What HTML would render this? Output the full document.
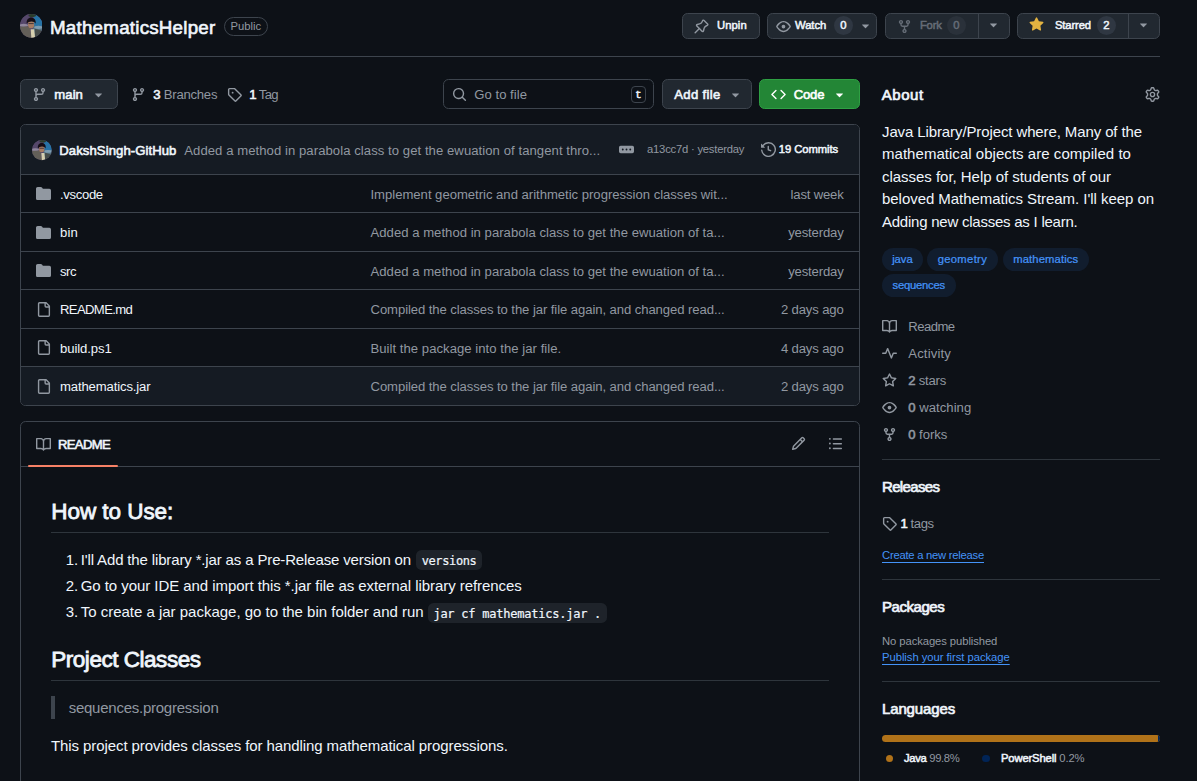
<!DOCTYPE html>
<html lang="en">
<head>
<meta charset="utf-8">
<title>MathematicsHelper</title>
<style>
*{box-sizing:border-box;margin:0;padding:0}
html,body{width:1197px;height:781px;overflow:hidden;background:#0d1117}
body{font-family:"Liberation Sans",sans-serif;font-size:13.125px;color:#f0f6fc;position:relative;line-height:1.5}
svg{display:block;fill:currentColor}
.abs{position:absolute}
.ic{width:15px;height:15px}
.muted{color:#9198a1}
b,strong{font-weight:400;-webkit-text-stroke:.045em}
a{color:inherit;text-decoration:none}

/* header */
#hline{left:20px;top:56px;width:1140px;height:1px;background:#3d444d}
#title{left:50px;top:15px;height:25px;line-height:25px;font-size:18.75px;font-weight:400;-webkit-text-stroke:.034em;white-space:nowrap}
#public{left:223.5px;top:16.5px;height:19px;line-height:17px;padding:0 6px;border:1px solid #3d444d;border-radius:20px;font-size:11.25px;color:#9198a1;font-weight:500}
.btn{position:absolute;height:26.25px;border:1px solid #3d444d;border-radius:5.6px;background:#212830;font-size:11.25px;font-weight:400;-webkit-text-stroke:.045em;color:#f0f6fc;display:flex;align-items:center;white-space:nowrap}
.btn.md{height:30px;font-size:13.125px}
.cnt{display:inline-block;min-width:18.75px;height:18.75px;line-height:18.75px;border-radius:20px;background:#2f3742;text-align:center;font-size:11.25px;font-weight:400;-webkit-text-stroke:.045em;padding:0 5px}
.tri{width:15px;height:15px;color:#9198a1}

/* toolbar */
#goto{left:443px;top:79px;width:211px;height:29.75px;border:1px solid #3d444d;border-radius:5.6px;background:#0d1117}
#kbd{left:630.75px;top:85.75px;width:15.25px;height:17.25px;font-weight:400;-webkit-text-stroke:.045em;padding-top:1px;border:1px solid #3d444d;border-radius:4px;font-family:"Liberation Mono",monospace;font-size:10.5px;line-height:14px;text-align:center;color:#f0f6fc}
.txt{position:absolute;white-space:nowrap}

/* file box */
#fbox{left:20px;top:124px;width:839.5px;height:282px;border:1px solid #3d444d;border-radius:5.6px;overflow:hidden}
#fhead{left:0;top:0;width:100%;height:50px;background:#151b23;border-bottom:1px solid #3d444d}
.rowline{position:absolute;left:21px;width:837.5px;height:1px;background:#3d444d}
.fn{position:absolute;left:60px;white-space:nowrap;color:#f0f6fc;line-height:20px}
.fm{position:absolute;left:370.5px;white-space:nowrap;color:#9198a1;line-height:20px}
.fd{position:absolute;right:353.4px;white-space:nowrap;color:#9198a1;line-height:20px;text-align:right}
.small{font-size:11.25px}
/* readme */
#rbox{left:20px;top:421.25px;width:839.5px;height:380px;border:1px solid #3d444d;border-radius:5.6px}
#rline{left:21px;top:466.25px;width:837.5px;height:1px;background:#3d444d}
#rtab{left:27.5px;top:464.5px;width:90px;height:2.25px;background:#f78166;border-radius:2px}
.md{position:absolute;white-space:nowrap;font-size:15px;line-height:22.5px;color:#f0f6fc}
.mh{position:absolute;white-space:nowrap;font-size:22.5px;line-height:28px;font-weight:400;-webkit-text-stroke:.036em;color:#f0f6fc}
.mhl{position:absolute;left:51px;width:778px;height:1px;background:#3d444db3}
.cd{font-family:"DejaVu Sans Mono","Liberation Mono",monospace;font-size:12px;-webkit-text-stroke:.2px;background:rgba(101,108,118,.2);border-radius:5.6px;padding:4.2px 5.5px 0;position:absolute;white-space:nowrap;line-height:15px;height:19.75px;color:#f0f6fc}
/* sidebar */
.sb{position:absolute;white-space:nowrap;font-size:15px;line-height:22.5px;color:#f0f6fc}
.topic{position:absolute;height:22.5px;line-height:22.5px;border-radius:20px;background:rgba(56,139,253,.1);color:#4493f8;font-size:11.25px;font-weight:400;-webkit-text-stroke:.022em;text-align:center;white-space:nowrap}
.sl{position:absolute;left:908.25px;white-space:nowrap;color:#9198a1;line-height:20px}
.sline{position:absolute;left:882px;width:278px;height:1px;background:#3d444db3}
.lnk{position:absolute;white-space:nowrap;color:#4493f8;font-size:11.25px;line-height:16px;text-decoration:underline;text-underline-offset:2.5px}
/*FIT*/
#title{letter-spacing:0.233px}
#t_unpin{letter-spacing:0.069px}
#t_watch{letter-spacing:-0.044px}
#t_fork{letter-spacing:-0.250px}
#t_starred{letter-spacing:-0.129px}
#t_main{letter-spacing:0.082px}
#t_branches{letter-spacing:-0.234px}
#t_tag{letter-spacing:-0.619px}
#t_goto{letter-spacing:0.028px}
#t_addfile{letter-spacing:0.346px}
#t_code{letter-spacing:-0.211px}
#t_about{letter-spacing:0.559px}
#t_author{letter-spacing:0.082px}
#t_cmsg{letter-spacing:0.059px}
#t_sha{letter-spacing:-0.214px}
#t_commits{letter-spacing:-0.077px}
#fn0{letter-spacing:-0.341px}
#fn1{letter-spacing:0.167px}
#fn2{letter-spacing:-0.495px}
#fn3{letter-spacing:-0.639px}
#fn4{letter-spacing:-0.098px}
#fn5{letter-spacing:-0.135px}
#fm0{letter-spacing:-0.022px}
#fm1{letter-spacing:0.022px}
#fm2{letter-spacing:0.022px}
#fm3{letter-spacing:-0.082px}
#fm4{letter-spacing:0.034px}
#fm5{letter-spacing:-0.082px}
#fd0{letter-spacing:-0.184px}
#fd1{letter-spacing:-0.160px}
#fd2{letter-spacing:-0.160px}
#fd3{letter-spacing:-0.144px}
#fd4{letter-spacing:-0.144px}
#fd5{letter-spacing:-0.144px}
#t_readme{letter-spacing:-0.682px}
#h_how{letter-spacing:-0.050px}
#li1{letter-spacing:-0.144px}
#li2{letter-spacing:-0.059px}
#li3{letter-spacing:-0.013px}
#h_proj{letter-spacing:-0.471px}
#bq{letter-spacing:-0.253px}
#p1{letter-spacing:-0.086px}
#d0{letter-spacing:-0.110px}
#d1{letter-spacing:0.038px}
#d2{letter-spacing:-0.031px}
#d3{letter-spacing:-0.046px}
#d4{letter-spacing:-0.237px}
#tp0{letter-spacing:-0.035px}
#tp1{letter-spacing:0.324px}
#tp2{letter-spacing:0.134px}
#tp3{letter-spacing:-0.214px}
#sl0{letter-spacing:-0.527px}
#sl1{letter-spacing:0.146px}
#sl2{letter-spacing:-0.223px}
#sl3{letter-spacing:0.031px}
#sl4{letter-spacing:-0.051px}
#t_rel{letter-spacing:-0.656px}
#t_tags{letter-spacing:-0.422px}
#l_rel{letter-spacing:-0.247px}
#t_pkg{letter-spacing:-0.447px}
#t_nopkg{letter-spacing:-0.079px}
#l_pkg{letter-spacing:-0.043px}
#t_lang{letter-spacing:-0.139px}
#t_java{letter-spacing:-0.351px}
#t_ps{letter-spacing:-0.154px}
#cdt1{letter-spacing:-0.387px}
#cdt2{letter-spacing:-0.237px}
/*ENDFIT*/
</style>
</head>
<body>

<!-- ===== header ===== -->
<div class="abs" id="avatar1" style="left:19.75px;top:14.4px;width:22.6px;height:23.7px"><svg viewBox="0 0 24 24" width="22.6" height="23.7" preserveAspectRatio="none"><defs><clipPath id="c1"><circle cx="12" cy="12" r="12"/></clipPath><filter id="b1" x="-20%" y="-20%" width="140%" height="140%"><feGaussianBlur stdDeviation="0.7"/></filter></defs><g clip-path="url(#c1)"><rect width="24" height="24" fill="#55466a"/><g filter="url(#b1)"><rect x="-2" y="-2" width="28" height="28" fill="#55466a"/><path d="M14 -2 L26 -2 L26 14 L15 13Z" fill="#2873a6"/><path d="M14 12 L26 12 L26 26 L14 26Z" fill="#56707f"/><ellipse cx="19.500" cy="13.500" rx="4.500" ry="1.600" fill="#7d9db3"/><ellipse cx="4" cy="11.500" rx="4.500" ry="1.600" fill="#8f869d"/><path d="M-2 13 L10 12.500 L13 26 L-2 26Z" fill="#645e58"/><path d="M16 15 L26 18 L26 26 L15 26Z" fill="#444b48"/><path d="M11.300 15.500 L15 15.500 L16.300 26 L12.200 26Z" fill="#d6cfae"/><ellipse cx="11.800" cy="10.300" rx="3.300" ry="4.200" fill="#a67b62"/><path d="M7.200 10 C5.800 1.500 18 1.500 16.600 10 C15.500 6.800 9 6.800 7.200 10Z" fill="#121117"/><rect x="9" y="9.300" width="5.500" height="0.900" fill="#3a2c30"/><ellipse cx="13" cy="1.500" rx="4" ry="1.500" fill="#2c3d2c"/></g></g></svg></div>
<div class="abs" id="title">MathematicsHelper</div>
<div class="abs" id="public">Public</div>
<div class="abs" id="hline"></div>

<!-- ===== header buttons ===== -->
<div class="btn" style="left:682px;top:13px;width:77.5px"></div>
<svg class="abs" style="left:694px;top:18.5px;width:15px;height:15px;color:#9198a1" viewBox="0 0 16 16"><path d="m11.294.984 3.722 3.722a1.75 1.75 0 0 1-.504 2.826l-1.327.613a3.089 3.089 0 0 0-1.707 2.084l-.584 2.454c-.317 1.332-1.972 1.8-2.94.832L5.75 11.311 1.78 15.28a.749.749 0 1 1-1.06-1.06l3.969-3.97-2.204-2.204c-.968-.968-.5-2.623.832-2.94l2.454-.584a3.08 3.08 0 0 0 2.084-1.707l.613-1.327a1.75 1.75 0 0 1 2.826-.504ZM6.283 9.723l2.732 2.731a.25.25 0 0 0 .42-.119l.584-2.454a4.586 4.586 0 0 1 2.537-3.098l1.328-.613a.25.25 0 0 0 .072-.404l-3.722-3.722a.25.25 0 0 0-.404.072l-.613 1.328a4.584 4.584 0 0 1-3.098 2.537l-2.454.584a.25.25 0 0 0-.119.42l2.731 2.732Z"/></svg>
<div class="txt" id="t_unpin" style="left:717px;top:13.4px;line-height:25.75px;font-size:11.25px;font-weight:400;-webkit-text-stroke:.045em">Unpin</div>
<div class="btn" style="left:767px;top:13px;width:109.5px"></div>
<svg class="abs" style="left:776px;top:18.5px;width:15px;height:15px;color:#9198a1" viewBox="0 0 16 16"><path d="M8 2c1.981 0 3.671.992 4.933 2.078 1.27 1.091 2.187 2.345 2.637 3.023a1.62 1.62 0 0 1 0 1.798c-.45.678-1.367 1.932-2.637 3.023C11.67 13.008 9.981 14 8 14c-1.981 0-3.671-.992-4.933-2.078C1.797 10.83.88 9.576.43 8.898a1.62 1.62 0 0 1 0-1.798c.45-.677 1.367-1.931 2.637-3.022C4.33 2.992 6.019 2 8 2ZM1.679 7.932a.12.12 0 0 0 0 .136c.411.622 1.241 1.75 2.366 2.717C5.176 11.758 6.527 12.5 8 12.5c1.473 0 2.825-.742 3.955-1.715 1.124-.967 1.954-2.096 2.366-2.717a.12.12 0 0 0 0-.136c-.412-.621-1.242-1.75-2.366-2.717C10.824 4.242 9.473 3.5 8 3.500c-1.473 0-2.825.742-3.955 1.715-1.124.967-1.954 2.096-2.366 2.717ZM8 10a2 2 0 1 1-.001-3.999A2 2 0 0 1 8 10Z"/></svg>
<div class="txt" id="t_watch" style="left:795px;top:13.4px;line-height:25.75px;font-size:11.25px;font-weight:400;-webkit-text-stroke:.045em">Watch</div>
<div class="abs cnt" style="left:834px;top:16px">0</div>
<svg class="abs tri" style="left:857.5px;top:18px" viewBox="0 0 16 16"><path d="m4.427 7.427 3.396 3.396a.25.25 0 0 0 .354 0l3.396-3.396A.25.25 0 0 0 11.396 7H4.604a.25.25 0 0 0-.177.427Z"/></svg>
<div class="btn" style="left:884.5px;top:13px;width:125px;background:#212830"></div>
<div class="abs" style="left:978px;top:14px;width:1px;height:24px;background:#3d444d"></div>
<svg class="abs" style="left:896.5px;top:18.5px;width:15px;height:15px;color:#656c76" viewBox="0 0 16 16"><path d="M5 5.372v.878c0 .414.336.75.75.75h4.5a.75.75 0 0 0 .75-.75v-.878a2.25 2.25 0 1 1 1.5 0v.878a2.25 2.25 0 0 1-2.25 2.25h-1.500v2.128a2.251 2.251 0 1 1-1.500 0V8.500h-1.500A2.250 2.250 0 0 1 3.500 6.250v-.878a2.250 2.250 0 1 1 1.500 0ZM5 3.250a.750.750 0 1 0-1.500 0 .750.750 0 0 0 1.500 0Zm6.750.750a.750.750 0 1 0 0-1.500.750.750 0 0 0 0 1.500Zm-3 8.750a.750.750 0 1 0-1.500 0 .750.750 0 0 0 1.500 0Z"/></svg>
<div class="txt" id="t_fork" style="left:920px;top:13.4px;line-height:25.75px;font-size:11.25px;font-weight:400;-webkit-text-stroke:.045em;color:#656c76">Fork</div>
<div class="abs cnt" style="left:947px;top:15.75px;color:#656c76;background:#2a313a">0</div>
<svg class="abs tri" style="left:986px;top:17.25px" viewBox="0 0 16 16"><path d="m4.427 7.427 3.396 3.396a.25.25 0 0 0 .354 0l3.396-3.396A.25.25 0 0 0 11.396 7H4.604a.25.25 0 0 0-.177.427Z"/></svg>
<div class="btn" style="left:1017px;top:13px;width:142.75px"></div>
<div class="abs" style="left:1128px;top:14px;width:1px;height:24px;background:#3d444d"></div>
<svg class="abs" style="left:1028.75px;top:17px;width:15px;height:15px;color:#e3b341" viewBox="0 0 16 16"><path d="M8 .25a.75.75 0 0 1 .673.418l1.882 3.815 4.21.612a.75.75 0 0 1 .416 1.279l-3.046 2.97.719 4.192a.751.751 0 0 1-1.088.791L8 12.347l-3.766 1.98a.75.75 0 0 1-1.088-.79l.72-4.194L.818 6.374a.75.75 0 0 1 .416-1.28l4.21-.611L7.327.668A.75.75 0 0 1 8 .25Z"/></svg>
<div class="txt" id="t_starred" style="left:1055px;top:13.4px;line-height:25.75px;font-size:11.25px;font-weight:400;-webkit-text-stroke:.045em">Starred</div>
<div class="abs cnt" style="left:1097px;top:15.75px">2</div>
<svg class="abs tri" style="left:1136px;top:17.25px" viewBox="0 0 16 16"><path d="m4.427 7.427 3.396 3.396a.25.25 0 0 0 .354 0l3.396-3.396A.25.25 0 0 0 11.396 7H4.604a.25.25 0 0 0-.177.427Z"/></svg>
<!-- ===== toolbar ===== -->
<div class="btn md" style="left:20px;top:79px;width:97.5px;height:29.75px"></div>
<svg class="abs" style="left:31.5px;top:86.5px;width:15px;height:15px;color:#9198a1" viewBox="0 0 16 16"><path d="M9.5 3.25a2.25 2.25 0 1 1 3 2.122V6A2.5 2.5 0 0 1 10 8.5H6a1 1 0 0 0-1 1v1.128a2.251 2.251 0 1 1-1.5 0V5.372a2.25 2.25 0 1 1 1.5 0v1.836A2.493 2.493 0 0 1 6 7h4a1 1 0 0 0 1-1v-.628A2.25 2.25 0 0 1 9.5 3.25Zm-6 0a.75.75 0 1 0 1.5 0 .75.75 0 0 0-1.5 0Zm8.25-.75a.75.75 0 1 0 0 1.5.75.75 0 0 0 0-1.5ZM4.25 12a.75.75 0 1 0 0 1.5.75.75 0 0 0 0-1.5Z"/></svg>
<div class="txt" id="t_main" style="left:54.25px;top:79.9px;line-height:29.75px;font-weight:400;-webkit-text-stroke:.045em">main</div>
<svg class="abs tri" style="left:90.5px;top:86.5px" viewBox="0 0 16 16"><path d="m4.427 7.427 3.396 3.396a.25.25 0 0 0 .354 0l3.396-3.396A.25.25 0 0 0 11.396 7H4.604a.25.25 0 0 0-.177.427Z"/></svg>
<svg class="abs" style="left:130.5px;top:86.5px;width:15px;height:15px;color:#9198a1" viewBox="0 0 16 16"><path d="M9.5 3.25a2.25 2.25 0 1 1 3 2.122V6A2.5 2.5 0 0 1 10 8.5H6a1 1 0 0 0-1 1v1.128a2.251 2.251 0 1 1-1.5 0V5.372a2.25 2.25 0 1 1 1.5 0v1.836A2.493 2.493 0 0 1 6 7h4a1 1 0 0 0 1-1v-.628A2.25 2.25 0 0 1 9.5 3.25Zm-6 0a.75.75 0 1 0 1.5 0 .75.75 0 0 0-1.5 0Zm8.25-.75a.75.75 0 1 0 0 1.5.75.75 0 0 0 0-1.5ZM4.25 12a.75.75 0 1 0 0 1.5.75.75 0 0 0 0-1.5Z"/></svg>
<div class="txt" id="t_branches" style="left:153.25px;top:79.9px;line-height:29.75px"><b>3</b> <span class="muted">Branches</span></div>
<svg class="abs" style="left:226.5px;top:86.5px;width:15px;height:15px;color:#9198a1" viewBox="0 0 16 16"><path d="M1 7.775V2.75C1 1.784 1.784 1 2.75 1h5.025c.464 0 .91.184 1.238.513l6.25 6.25a1.75 1.75 0 0 1 0 2.474l-5.026 5.026a1.75 1.75 0 0 1-2.474 0l-6.25-6.25A1.752 1.752 0 0 1 1 7.775Zm1.5 0c0 .066.026.13.073.177l6.25 6.25a.25.25 0 0 0 .354 0l5.025-5.025a.25.25 0 0 0 0-.354l-6.25-6.25a.25.25 0 0 0-.177-.073H2.75a.25.25 0 0 0-.25.25ZM6 5a1 1 0 1 1 0 2 1 1 0 0 1 0-2Z"/></svg>
<div class="txt" id="t_tag" style="left:249.25px;top:79.9px;line-height:29.75px"><b>1</b> <span class="muted">Tag</span></div>
<div class="abs" id="goto"></div>
<svg class="abs" style="left:451.75px;top:86.5px;width:15px;height:15px;color:#9198a1" viewBox="0 0 16 16"><path d="M10.68 11.74a6 6 0 0 1-7.922-8.982 6 6 0 0 1 8.982 7.922l3.04 3.04a.749.749 0 0 1-.326 1.275.749.749 0 0 1-.734-.215ZM11.5 7a4.499 4.499 0 1 0-8.997 0A4.499 4.499 0 0 0 11.5 7Z"/></svg>
<div class="txt muted" id="t_goto" style="left:474.25px;top:79.9px;line-height:29.75px">Go to file</div>
<div class="abs" id="kbd">t</div>
<div class="btn md" style="left:661.5px;top:79px;width:90px;height:29.75px"></div>
<div class="txt" id="t_addfile" style="left:674.25px;top:79.9px;line-height:29.75px;font-weight:400;-webkit-text-stroke:.045em">Add file</div>
<svg class="abs tri" style="left:727.75px;top:86.5px" viewBox="0 0 16 16"><path d="m4.427 7.427 3.396 3.396a.25.25 0 0 0 .354 0l3.396-3.396A.25.25 0 0 0 11.396 7H4.604a.25.25 0 0 0-.177.427Z"/></svg>
<div class="btn md" style="left:759px;top:79px;width:100.5px;height:29.75px;background:#238636;border-color:#2ea043"></div>
<svg class="abs" style="left:770.5px;top:86.5px;width:15px;height:15px;color:#ffffff" viewBox="0 0 16 16"><path d="m11.28 3.22 4.25 4.25a.75.75 0 0 1 0 1.06l-4.25 4.25a.749.749 0 0 1-1.275-.326.749.749 0 0 1 .215-.734L13.94 8l-3.72-3.72a.749.749 0 0 1 .326-1.275.749.749 0 0 1 .734.215Zm-6.56 0a.751.751 0 0 1 1.042.018.751.751 0 0 1 .018 1.042L2.06 8l3.72 3.72a.749.749 0 0 1-.326 1.275.749.749 0 0 1-.734-.215L.47 8.53a.75.75 0 0 1 0-1.06Z"/></svg>
<div class="txt" id="t_code" style="left:793.75px;top:79.9px;line-height:29.75px;font-weight:400;-webkit-text-stroke:.045em;color:#fff">Code</div>
<svg class="abs tri"  style="color:#fff;left:831.5px;top:86.5px" viewBox="0 0 16 16"><path d="m4.427 7.427 3.396 3.396a.25.25 0 0 0 .354 0l3.396-3.396A.25.25 0 0 0 11.396 7H4.604a.25.25 0 0 0-.177.427Z"/></svg>
<!-- ===== sidebar about ===== -->
<div class="txt" id="t_about" style="left:881.75px;top:84.25px;line-height:22.5px;font-size:15px;font-weight:400;-webkit-text-stroke:.045em">About</div>
<svg class="abs" style="left:1145.25px;top:87px;width:15px;height:15px;color:#9198a1" viewBox="0 0 16 16"><path d="M8 0a8.2 8.2 0 0 1 .701.031C9.444.095 9.99.645 10.16 1.29l.288 1.107c.018.066.079.158.212.224.231.114.454.243.668.386.123.082.233.09.299.071l1.103-.303c.644-.176 1.392.021 1.82.63.27.385.506.792.704 1.218.315.675.111 1.422-.364 1.891l-.814.806c-.049.048-.098.147-.088.294.016.257.016.515 0 .772-.01.147.038.246.088.294l.814.806c.475.469.679 1.216.364 1.891a7.977 7.977 0 0 1-.704 1.217c-.428.61-1.176.807-1.82.63l-1.102-.302c-.067-.019-.177-.011-.3.071a5.909 5.909 0 0 1-.668.386c-.133.066-.194.158-.211.224l-.29 1.106c-.168.646-.715 1.196-1.458 1.26a8.006 8.006 0 0 1-1.402 0c-.743-.064-1.289-.614-1.458-1.26l-.289-1.106c-.018-.066-.079-.158-.212-.224a5.738 5.738 0 0 1-.668-.386c-.123-.082-.233-.09-.299-.071l-1.103.303c-.644.176-1.392-.021-1.82-.63a8.12 8.12 0 0 1-.704-1.218c-.315-.675-.111-1.422.363-1.891l.815-.806c.05-.048.098-.147.088-.294a6.214 6.214 0 0 1 0-.772c.01-.147-.038-.246-.088-.294l-.815-.806C.635 6.045.431 5.298.746 4.623a7.92 7.920 0 0 1 .704-1.217c.428-.61 1.176-.807 1.82-.63l1.102.302c.067.019.177.011.3-.071.214-.143.437-.272.668-.386.133-.066.194-.158.211-.224l.29-1.106C6.009.645 6.556.095 7.299.03 7.530.01 7.764 0 8 0Zm-.571 1.525c-.036.003-.108.036-.137.146l-.289 1.105c-.147.561-.549.967-.998 1.189-.173.086-.34.183-.5.29-.417.278-.97.423-1.529.27l-1.103-.303c-.109-.03-.175.016-.195.045-.22.312-.412.644-.573.99-.014.031-.021.11.059.19l.815.806c.411.406.562.957.53 1.456a4.709 4.709 0 0 0 0 .582c.032.499-.119 1.05-.53 1.456l-.815.806c-.081.08-.073.159-.059.19.162.346.353.677.573.989.02.03.085.076.195.046l1.102-.303c.56-.153 1.113-.008 1.53.27.161.107.328.204.501.29.447.222.85.629.997 1.189l.289 1.105c.029.109.101.143.137.146a6.6 6.6 0 0 0 1.142 0c.036-.003.108-.036.137-.146l.289-1.105c.147-.561.549-.967.998-1.189.173-.086.34-.183.5-.29.417-.278.97-.423 1.529-.27l1.103.303c.109.029.175-.016.195-.045.22-.313.411-.644.573-.99.014-.031.021-.11-.059-.19l-.815-.806c-.411-.406-.562-.957-.53-1.456a4.709 4.709 0 0 0 0-.582c-.032-.499.119-1.05.53-1.456l.815-.806c.081-.08.073-.159.059-.19a6.464 6.464 0 0 0-.573-.989c-.02-.03-.085-.076-.195-.046l-1.102.303c-.56.153-1.113.008-1.53-.27a4.44 4.44 0 0 0-.501-.29c-.447-.222-.85-.629-.997-1.189l-.289-1.105c-.029-.11-.101-.143-.137-.146a6.6 6.6 0 0 0-1.142 0ZM11 8a3 3 0 1 1-6 0 3 3 0 0 1 6 0ZM9.5 8a1.5 1.5 0 1 0-3.001.001A1.5 1.5 0 0 0 9.5 8Z"/></svg>

<!-- ===== file box ===== -->
<div class="abs" id="fbox"><div class="abs" id="fhead"></div><div class="abs" style="left:0;top:242px;width:100%;height:39px;background:#151b23"></div></div>
<div class="abs" id="avatar2" style="left:32px;top:140.25px;width:19.75px;height:20.25px"><svg viewBox="0 0 24 24" width="19.75" height="20.25" preserveAspectRatio="none"><defs><clipPath id="c2"><circle cx="12" cy="12" r="12"/></clipPath><filter id="b2" x="-20%" y="-20%" width="140%" height="140%"><feGaussianBlur stdDeviation="0.7"/></filter></defs><g clip-path="url(#c2)"><rect width="24" height="24" fill="#55466a"/><g filter="url(#b2)"><rect x="-2" y="-2" width="28" height="28" fill="#55466a"/><path d="M14 -2 L26 -2 L26 14 L15 13Z" fill="#2873a6"/><path d="M14 12 L26 12 L26 26 L14 26Z" fill="#56707f"/><ellipse cx="19.500" cy="13.500" rx="4.500" ry="1.600" fill="#7d9db3"/><ellipse cx="4" cy="11.500" rx="4.500" ry="1.600" fill="#8f869d"/><path d="M-2 13 L10 12.500 L13 26 L-2 26Z" fill="#645e58"/><path d="M16 15 L26 18 L26 26 L15 26Z" fill="#444b48"/><path d="M11.300 15.500 L15 15.500 L16.300 26 L12.200 26Z" fill="#d6cfae"/><ellipse cx="11.800" cy="10.300" rx="3.300" ry="4.200" fill="#a67b62"/><path d="M7.200 10 C5.800 1.500 18 1.500 16.600 10 C15.500 6.800 9 6.800 7.200 10Z" fill="#121117"/><rect x="9" y="9.300" width="5.500" height="0.900" fill="#3a2c30"/><ellipse cx="13" cy="1.500" rx="4" ry="1.500" fill="#2c3d2c"/></g></g></svg></div>
<div class="txt" id="t_author" style="left:59.25px;top:140.9px;line-height:20px;font-weight:400;-webkit-text-stroke:.045em">DakshSingh-GitHub</div>
<div class="txt muted" id="t_cmsg" style="left:184.25px;top:140.9px;line-height:20px">Added a method in parabola class to get the ewuation of tangent thro...</div>
<svg class="abs" style="left:618.75px;top:142.25px;width:15px;height:15px;color:#9198a1" viewBox="0 0 16 16"><path d="M0 5.75C0 4.784.784 4 1.75 4h12.5c.966 0 1.75.784 1.75 1.75v4.5A1.75 1.75 0 0 1 14.25 12H1.75A1.75 1.75 0 0 1 0 10.25ZM12 7a1 1 0 1 0 0 2 1 1 0 0 0 0-2ZM7 8a1 1 0 1 0 2 0 1 1 0 0 0-2 0ZM4 7a1 1 0 1 0 0 2 1 1 0 0 0 0-2Z"/></svg>
<div class="txt muted small" id="t_sha" style="left:647px;top:138.6px;line-height:20px">a13cc7d · yesterday</div>
<svg class="abs" style="left:760.5px;top:141.5px;width:15px;height:15px;color:#9198a1" viewBox="0 0 16 16"><path d="m.427 1.927 1.215 1.215a8.002 8.002 0 1 1-1.6 5.685.75.75 0 1 1 1.493-.154 6.5 6.5 0 1 0 1.18-4.458l1.358 1.358A.25.25 0 0 1 3.896 6H.25A.25.25 0 0 1 0 5.75V2.104a.25.25 0 0 1 .427-.177ZM7.75 4a.75.75 0 0 1 .75.75v2.992l2.028.812a.75.75 0 0 1-.557 1.392l-2.5-1A.751.751 0 0 1 7 8.25v-3.5A.75.75 0 0 1 7.75 4Z"/></svg>
<div class="txt small" id="t_commits" style="left:778.75px;top:138.5px;line-height:20px;font-weight:400;-webkit-text-stroke:.045em">19 Commits</div>
<svg class="abs" style="left:35.75px;top:186.47px;width:15px;height:15px;color:#9198a1" viewBox="0 0 16 16"><path d="M1.75 1A1.75 1.75 0 0 0 0 2.75v10.5C0 14.216.784 15 1.75 15h12.5A1.75 1.75 0 0 0 16 13.25v-8.5A1.75 1.75 0 0 0 14.25 3H7.5a.25.25 0 0 1-.2-.1l-.9-1.2C6.07 1.26 5.55 1 5 1H1.75Z"/></svg>
<div class="fn" id="fn0" style="top:184.77px">.vscode</div>
<div class="fm" id="fm0" style="top:184.77px">Implement geometric and arithmetic progression classes wit...</div>
<div class="fd" id="fd0" style="top:184.77px">last week</div>
<svg class="abs" style="left:35.75px;top:224.91px;width:15px;height:15px;color:#9198a1" viewBox="0 0 16 16"><path d="M1.75 1A1.75 1.75 0 0 0 0 2.75v10.5C0 14.216.784 15 1.75 15h12.5A1.75 1.75 0 0 0 16 13.25v-8.5A1.75 1.75 0 0 0 14.25 3H7.5a.25.25 0 0 1-.2-.1l-.9-1.2C6.07 1.26 5.55 1 5 1H1.75Z"/></svg>
<div class="fn" id="fn1" style="top:223.21px">bin</div>
<div class="fm" id="fm1" style="top:223.21px">Added a method in parabola class to get the ewuation of ta...</div>
<div class="fd" id="fd1" style="top:223.21px">yesterday</div>
<svg class="abs" style="left:35.75px;top:263.35px;width:15px;height:15px;color:#9198a1" viewBox="0 0 16 16"><path d="M1.75 1A1.75 1.75 0 0 0 0 2.75v10.5C0 14.216.784 15 1.75 15h12.5A1.75 1.75 0 0 0 16 13.25v-8.5A1.75 1.75 0 0 0 14.25 3H7.5a.25.25 0 0 1-.2-.1l-.9-1.2C6.07 1.26 5.55 1 5 1H1.75Z"/></svg>
<div class="fn" id="fn2" style="top:261.65px">src</div>
<div class="fm" id="fm2" style="top:261.65px">Added a method in parabola class to get the ewuation of ta...</div>
<div class="fd" id="fd2" style="top:261.65px">yesterday</div>
<svg class="abs" style="left:35.75px;top:301.79px;width:15px;height:15px;color:#9198a1" viewBox="0 0 16 16"><path d="M2 1.75C2 .784 2.784 0 3.75 0h6.586c.464 0 .909.184 1.237.513l2.914 2.914c.329.328.513.773.513 1.237v9.586A1.75 1.75 0 0 1 13.25 16h-9.5A1.75 1.75 0 0 1 2 14.25Zm1.75-.25a.25.25 0 0 0-.25.25v12.5c0 .138.112.25.25.25h9.5a.25.25 0 0 0 .25-.25V6h-2.75A1.75 1.75 0 0 1 9 4.25V1.5Zm6.75.062V4.25c0 .138.112.25.25.25h2.688l-.011-.013-2.914-2.914-.013-.011Z"/></svg>
<div class="fn" id="fn3" style="top:300.09px">README.md</div>
<div class="fm" id="fm3" style="top:300.09px">Compiled the classes to the jar file again, and changed read...</div>
<div class="fd" id="fd3" style="top:300.09px">2 days ago</div>
<svg class="abs" style="left:35.75px;top:340.23px;width:15px;height:15px;color:#9198a1" viewBox="0 0 16 16"><path d="M2 1.75C2 .784 2.784 0 3.75 0h6.586c.464 0 .909.184 1.237.513l2.914 2.914c.329.328.513.773.513 1.237v9.586A1.75 1.75 0 0 1 13.25 16h-9.5A1.75 1.75 0 0 1 2 14.25Zm1.75-.25a.25.25 0 0 0-.25.25v12.5c0 .138.112.25.25.25h9.5a.25.25 0 0 0 .25-.25V6h-2.75A1.75 1.75 0 0 1 9 4.25V1.5Zm6.75.062V4.25c0 .138.112.25.25.25h2.688l-.011-.013-2.914-2.914-.013-.011Z"/></svg>
<div class="fn" id="fn4" style="top:338.53px">build.ps1</div>
<div class="fm" id="fm4" style="top:338.53px">Built the package into the jar file.</div>
<div class="fd" id="fd4" style="top:338.53px">4 days ago</div>
<svg class="abs" style="left:35.75px;top:378.67px;width:15px;height:15px;color:#9198a1" viewBox="0 0 16 16"><path d="M2 1.75C2 .784 2.784 0 3.75 0h6.586c.464 0 .909.184 1.237.513l2.914 2.914c.329.328.513.773.513 1.237v9.586A1.75 1.75 0 0 1 13.25 16h-9.5A1.75 1.75 0 0 1 2 14.25Zm1.75-.25a.25.25 0 0 0-.25.25v12.5c0 .138.112.25.25.25h9.5a.25.25 0 0 0 .25-.25V6h-2.75A1.75 1.75 0 0 1 9 4.25V1.5Zm6.75.062V4.25c0 .138.112.25.25.25h2.688l-.011-.013-2.914-2.914-.013-.011Z"/></svg>
<div class="fn" id="fn5" style="top:376.97px">mathematics.jar</div>
<div class="fm" id="fm5" style="top:376.97px">Compiled the classes to the jar file again, and changed read...</div>
<div class="fd" id="fd5" style="top:376.97px">2 days ago</div>
<div class="rowline" style="top:212px"></div>
<div class="rowline" style="top:251px"></div>
<div class="rowline" style="top:289px"></div>
<div class="rowline" style="top:328px"></div>
<div class="rowline" style="top:366px"></div>
<!-- ===== readme ===== -->
<div class="abs" id="rbox"></div><div class="abs" id="rline"></div><div class="abs" id="rtab"></div>
<svg class="abs" style="left:35.75px;top:436.5px;width:15px;height:15px;color:#9198a1" viewBox="0 0 16 16"><path d="M0 1.75A.75.75 0 0 1 .75 1h4.253c1.227 0 2.317.59 3 1.501A3.743 3.743 0 0 1 11.006 1h4.245a.75.75 0 0 1 .75.75v10.5a.75.75 0 0 1-.75.75h-4.507a2.25 2.25 0 0 0-1.591.659l-.622.621a.75.75 0 0 1-1.06 0l-.622-.621A2.25 2.25 0 0 0 5.258 13H.75a.75.75 0 0 1-.75-.75Zm7.251 10.324.004-5.073-.002-2.253A2.25 2.25 0 0 0 5.003 2.5H1.5v9h3.757a3.75 3.75 0 0 1 1.994.574ZM8.755 4.75l-.004 7.322a3.752 3.752 0 0 1 1.992-.572H14.5v-9h-3.495a2.25 2.25 0 0 0-2.25 2.25Z"/></svg>
<div class="txt" id="t_readme" style="left:58px;top:435px;line-height:20px;font-weight:400;-webkit-text-stroke:.045em">README</div>
<svg class="abs" style="left:790.5px;top:436px;width:15px;height:15px;color:#9198a1" viewBox="0 0 16 16"><path d="M11.013 1.427a1.75 1.75 0 0 1 2.474 0l1.086 1.086a1.75 1.75 0 0 1 0 2.474l-8.61 8.61c-.21.21-.47.364-.756.445l-3.251.93a.75.75 0 0 1-.927-.928l.929-3.25c.081-.286.235-.547.445-.758l8.61-8.61Zm.176 4.823L9.75 4.81l-6.286 6.287a.253.253 0 0 0-.064.108l-.558 1.953 1.953-.558a.253.253 0 0 0 .108-.064Zm1.238-3.763a.25.25 0 0 0-.354 0L10.811 3.75l1.439 1.44 1.263-1.263a.25.25 0 0 0 0-.354Z"/></svg>
<svg class="abs" style="left:828px;top:436px;width:15px;height:15px;color:#9198a1" viewBox="0 0 16 16"><path d="M5.75 2.5h8.5a.75.75 0 0 1 0 1.5h-8.5a.75.75 0 0 1 0-1.5Zm0 5h8.5a.75.75 0 0 1 0 1.5h-8.5a.75.75 0 0 1 0-1.5Zm0 5h8.5a.75.75 0 0 1 0 1.5h-8.5a.75.75 0 0 1 0-1.5ZM2 14a1 1 0 1 1 0-2 1 1 0 0 1 0 2Zm1-6a1 1 0 1 1-2 0 1 1 0 0 1 2 0ZM2 4a1 1 0 1 1 0-2 1 1 0 0 1 0 2Z"/></svg>
<div class="mh" id="h_how" style="left:51.25px;top:497.5px">How to Use:</div>
<div class="mhl" style="top:532.25px"></div>
<div class="md" style="left:65.75px;top:548.5px">1.</div><div class="md" id="li1" style="left:80.75px;top:548.5px">I'll Add the library *.jar as a Pre-Release version on</div>
<div class="cd" id="cd1" style="left:416.2px;top:550px;width:65.6px"><span id="cdt1">versions</span></div>
<div class="md" style="left:65.75px;top:574.5px">2.</div><div class="md" id="li2" style="left:80.75px;top:574.5px">Go to your IDE and import this *.jar file as external library refrences</div>
<div class="md" style="left:65.75px;top:600.75px">3.</div><div class="md" id="li3" style="left:80.75px;top:600.75px">To create a jar package, go to the bin folder and run</div>
<div class="cd" id="cd2" style="left:427.9px;top:603px;width:179.3px"><span id="cdt2">jar cf mathematics.jar .</span></div>
<div class="mh" id="h_proj" style="left:51.25px;top:646px">Project Classes</div>
<div class="mhl" style="top:680px"></div>
<div class="abs" style="left:50.75px;top:695.6px;width:3.75px;height:23.4px;background:#3d444d"></div>
<div class="md" id="bq" style="left:68.7px;top:696.5px;color:#9198a1">sequences.progression</div>
<div class="md" id="p1" style="left:51px;top:735px">This project provides classes for handling mathematical progressions.</div>
<!-- ===== sidebar ===== -->
<div class="sb" id="d0" style="left:882px;top:120.75px">Java Library/Project where, Many of the</div>
<div class="sb" id="d1" style="left:882px;top:143.25px">mathematical objects are compiled to</div>
<div class="sb" id="d2" style="left:882px;top:165.75px">classes for, Help of students of our</div>
<div class="sb" id="d3" style="left:882px;top:188.25px">beloved Mathematics Stream. I'll keep on</div>
<div class="sb" id="d4" style="left:882px;top:210.75px">Adding new classes as I learn.</div>
<div class="topic" style="left:881.75px;top:248px;width:41.25px"><span id="tp0">java</span></div>
<div class="topic" style="left:927px;top:248px;width:70.75px"><span id="tp1">geometry</span></div>
<div class="topic" style="left:1002.5px;top:248px;width:86.5px"><span id="tp2">mathematics</span></div>
<div class="topic" style="left:881.75px;top:274.1px;width:74px"><span id="tp3">sequences</span></div>
<svg class="abs" style="left:882px;top:318.75px;width:15px;height:15px;color:#9198a1" viewBox="0 0 16 16"><path d="M0 1.75A.75.75 0 0 1 .75 1h4.253c1.227 0 2.317.59 3 1.501A3.743 3.743 0 0 1 11.006 1h4.245a.75.75 0 0 1 .75.75v10.5a.75.75 0 0 1-.75.75h-4.507a2.25 2.25 0 0 0-1.591.659l-.622.621a.75.75 0 0 1-1.06 0l-.622-.621A2.25 2.25 0 0 0 5.258 13H.75a.75.75 0 0 1-.75-.75Zm7.251 10.324.004-5.073-.002-2.253A2.25 2.25 0 0 0 5.003 2.5H1.5v9h3.757a3.75 3.75 0 0 1 1.994.574ZM8.755 4.75l-.004 7.322a3.752 3.752 0 0 1 1.992-.572H14.5v-9h-3.495a2.25 2.25 0 0 0-2.25 2.25Z"/></svg>
<div class="sl" id="sl0" style="top:316.90px">Readme</div>
<svg class="abs" style="left:882px;top:345.6px;width:15px;height:15px;color:#9198a1" viewBox="0 0 16 16"><path d="M6 2c.306 0 .582.187.696.471L10 10.731l1.304-3.26A.751.751 0 0 1 12 7h3.25a.75.75 0 0 1 0 1.5h-2.742l-1.812 4.528a.751.751 0 0 1-1.392 0L6 4.77 4.696 8.03A.75.75 0 0 1 4 8.5H.75a.75.75 0 0 1 0-1.5h2.742l1.812-4.529A.751.751 0 0 1 6 2Z"/></svg>
<div class="sl" id="sl1" style="top:343.75px">Activity</div>
<svg class="abs" style="left:882px;top:372.5px;width:15px;height:15px;color:#9198a1" viewBox="0 0 16 16"><path d="M8 .25a.75.75 0 0 1 .673.418l1.882 3.815 4.21.612a.75.75 0 0 1 .416 1.279l-3.046 2.97.719 4.192a.751.751 0 0 1-1.088.791L8 12.347l-3.766 1.98a.75.75 0 0 1-1.088-.79l.72-4.194L.818 6.374a.75.75 0 0 1 .416-1.28l4.21-.611L7.327.668A.75.75 0 0 1 8 .25Zm0 2.445L6.615 5.5a.75.75 0 0 1-.564.41l-3.097.45 2.24 2.184a.75.75 0 0 1 .216.664l-.528 3.084 2.769-1.456a.75.75 0 0 1 .698 0l2.77 1.456-.53-3.084a.75.75 0 0 1 .216-.664l2.24-2.183-3.096-.45a.75.75 0 0 1-.564-.41L8 2.694Z"/></svg>
<div class="sl" id="sl2" style="top:370.65px"><b>2</b> stars</div>
<svg class="abs" style="left:882px;top:399.5px;width:15px;height:15px;color:#9198a1" viewBox="0 0 16 16"><path d="M8 2c1.981 0 3.671.992 4.933 2.078 1.27 1.091 2.187 2.345 2.637 3.023a1.62 1.62 0 0 1 0 1.798c-.45.678-1.367 1.932-2.637 3.023C11.67 13.008 9.981 14 8 14c-1.981 0-3.671-.992-4.933-2.078C1.797 10.83.88 9.576.43 8.898a1.62 1.62 0 0 1 0-1.798c.45-.677 1.367-1.931 2.637-3.022C4.33 2.992 6.019 2 8 2ZM1.679 7.932a.12.12 0 0 0 0 .136c.411.622 1.241 1.75 2.366 2.717C5.176 11.758 6.527 12.5 8 12.5c1.473 0 2.825-.742 3.955-1.715 1.124-.967 1.954-2.096 2.366-2.717a.12.12 0 0 0 0-.136c-.412-.621-1.242-1.75-2.366-2.717C10.824 4.242 9.473 3.5 8 3.5c-1.473 0-2.825.742-3.955 1.715-1.124.967-1.954 2.096-2.366 2.717ZM8 10a2 2 0 1 1-.001-3.999A2 2 0 0 1 8 10Z"/></svg>
<div class="sl" id="sl3" style="top:397.65px"><b>0</b> watching</div>
<svg class="abs" style="left:882px;top:426.5px;width:15px;height:15px;color:#9198a1" viewBox="0 0 16 16"><path d="M5 5.372v.878c0 .414.336.75.75.75h4.5a.75.75 0 0 0 .75-.75v-.878a2.25 2.25 0 1 1 1.5 0v.878a2.25 2.25 0 0 1-2.25 2.25h-1.5v2.128a2.251 2.251 0 1 1-1.5 0V8.5h-1.5A2.25 2.25 0 0 1 3.5 6.25v-.878a2.25 2.25 0 1 1 1.5 0ZM5 3.25a.75.75 0 1 0-1.5 0 .75.75 0 0 0 1.5 0Zm6.75.75a.75.75 0 1 0 0-1.5.75.75 0 0 0 0 1.5Zm-3 8.75a.75.75 0 1 0-1.5 0 .75.75 0 0 0 1.5 0Z"/></svg>
<div class="sl" id="sl4" style="top:424.65px"><b>0</b> forks</div>
<div class="sline" style="top:459px"></div>
<div class="sb" id="t_rel" style="left:882px;top:475.5px;font-weight:400;-webkit-text-stroke:.045em">Releases</div>
<svg class="abs" style="left:881.75px;top:516px;width:15px;height:15px;color:#9198a1" viewBox="0 0 16 16"><path d="M1 7.775V2.75C1 1.784 1.784 1 2.75 1h5.025c.464 0 .91.184 1.238.513l6.25 6.25a1.75 1.75 0 0 1 0 2.474l-5.026 5.026a1.75 1.75 0 0 1-2.474 0l-6.25-6.25A1.752 1.752 0 0 1 1 7.775Zm1.5 0c0 .066.026.13.073.177l6.25 6.25a.25.25 0 0 0 .354 0l5.025-5.025a.25.25 0 0 0 0-.354l-6.25-6.25a.25.25 0 0 0-.177-.073H2.75a.25.25 0 0 0-.25.25ZM6 5a1 1 0 1 1 0 2 1 1 0 0 1 0-2Z"/></svg>
<div class="txt" id="t_tags" style="left:900.5px;top:514.15px;line-height:20px"><b>1</b> <span class="muted">tags</span></div>
<div class="lnk" id="l_rel" style="left:882px;top:547px">Create a new release</div>
<div class="sline" style="top:579px"></div>
<div class="sb" id="t_pkg" style="left:882px;top:595.5px;font-weight:400;-webkit-text-stroke:.045em">Packages</div>
<div class="txt muted small" id="t_nopkg" style="left:882px;top:633px;line-height:16px">No packages published</div>
<div class="lnk" id="l_pkg" style="left:882px;top:649px">Publish your first package</div>
<div class="sline" style="top:681.4px"></div>
<div class="sb" id="t_lang" style="left:882px;top:697.5px;font-weight:400;-webkit-text-stroke:.045em">Languages</div>
<div class="abs" style="left:882px;top:734.75px;width:277.5px;height:7.5px;border-radius:5.6px;background:#b07219;overflow:hidden"><div class="abs" style="right:0;top:0;width:1.5px;height:100%;background:#012456"></div></div>
<div class="abs" style="left:885.6px;top:754.7px;width:7.5px;height:7.5px;border-radius:50%;background:#b07219"></div>
<div class="txt small" id="t_java" style="left:904.1px;top:750.4px;line-height:16px"><b>Java</b> <span class="muted">99.8%</span></div>
<div class="abs" style="left:982px;top:754.7px;width:7.5px;height:7.5px;border-radius:50%;background:#012456"></div>
<div class="txt small" id="t_ps" style="left:1001px;top:750.4px;line-height:16px"><b>PowerShell</b> <span class="muted">0.2%</span></div>

</body>
</html>
